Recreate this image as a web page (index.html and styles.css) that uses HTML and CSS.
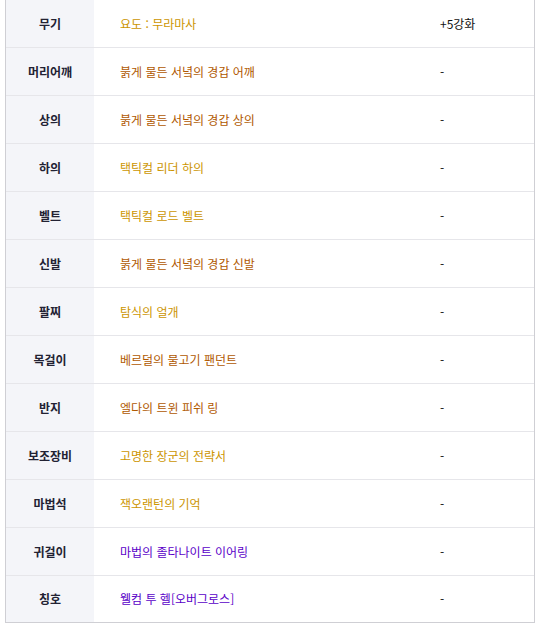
FILE: index.html
```html
<!DOCTYPE html>
<html lang="ko">
<head>
<meta charset="utf-8">
<link rel="stylesheet" href="styles.css">
</head>
<body>
<div class="equip">
  <div class="row"><div class="label">무기</div><div class="item unique">요도 : 무라마사</div><div class="note">+5강화</div></div>
  <div class="row"><div class="label">머리어깨</div><div class="item chaos">붉게 물든 서녘의 경갑 어깨</div><div class="note">-</div></div>
  <div class="row"><div class="label">상의</div><div class="item chaos">붉게 물든 서녘의 경갑 상의</div><div class="note">-</div></div>
  <div class="row"><div class="label">하의</div><div class="item unique">택틱컬 리더 하의</div><div class="note">-</div></div>
  <div class="row"><div class="label">벨트</div><div class="item unique">택틱컬 로드 벨트</div><div class="note">-</div></div>
  <div class="row"><div class="label">신발</div><div class="item chaos">붉게 물든 서녘의 경갑 신발</div><div class="note">-</div></div>
  <div class="row"><div class="label">팔찌</div><div class="item unique">탐식의 얼개</div><div class="note">-</div></div>
  <div class="row"><div class="label">목걸이</div><div class="item chaos">베르덜의 물고기 팬던트</div><div class="note">-</div></div>
  <div class="row"><div class="label">반지</div><div class="item chaos">엘다의 트윈 피쉬 링</div><div class="note">-</div></div>
  <div class="row"><div class="label">보조장비</div><div class="item unique">고명한 장군의 전략서</div><div class="note">-</div></div>
  <div class="row"><div class="label">마법석</div><div class="item unique">잭오랜턴의 기억</div><div class="note">-</div></div>
  <div class="row"><div class="label">귀걸이</div><div class="item epic">마법의 졸타나이트 이어링</div><div class="note">-</div></div>
  <div class="row last"><div class="label">칭호</div><div class="item epic">웰컴 투 헬[오버그로스]</div><div class="note">-</div></div>
</div>
</body>
</html>
```
FILE: styles.css
```css
html, body {
  margin: 0;
  padding: 0;
  background: #ffffff;
}

body {
  font-family: "Noto Sans CJK KR", "Noto Sans", sans-serif;
  font-size: 12px;
  color: #222222;
}

.equip {
  margin-left: 5px;
  width: 530px;
  box-sizing: border-box;
  border-left: 1px solid #cfcfd4;
  border-right: 1px solid #cfcfd4;
  border-bottom: 1px solid #cfcfd4;
}

.row {
  display: grid;
  grid-template-columns: 88px 320px 1fr;
  height: 48px;
  box-sizing: border-box;
  border-bottom: 1px solid #e6e6ea;
}

.row.last {
  height: 46px;
  border-bottom: none;
}

.label,
.item,
.note {
  display: flex;
  align-items: center;
  line-height: 16px;
}

.label {
  justify-content: center;
  background: #f4f5f9;
  font-weight: 700;
  color: #222233;
}

.item {
  padding-left: 26px;
}

.note {
  padding-left: 26px;
  color: #111111;
}

.unique { color: #cc9500; }
.chaos { color: #b05800; }
.epic { color: #5a00c8; }
```
